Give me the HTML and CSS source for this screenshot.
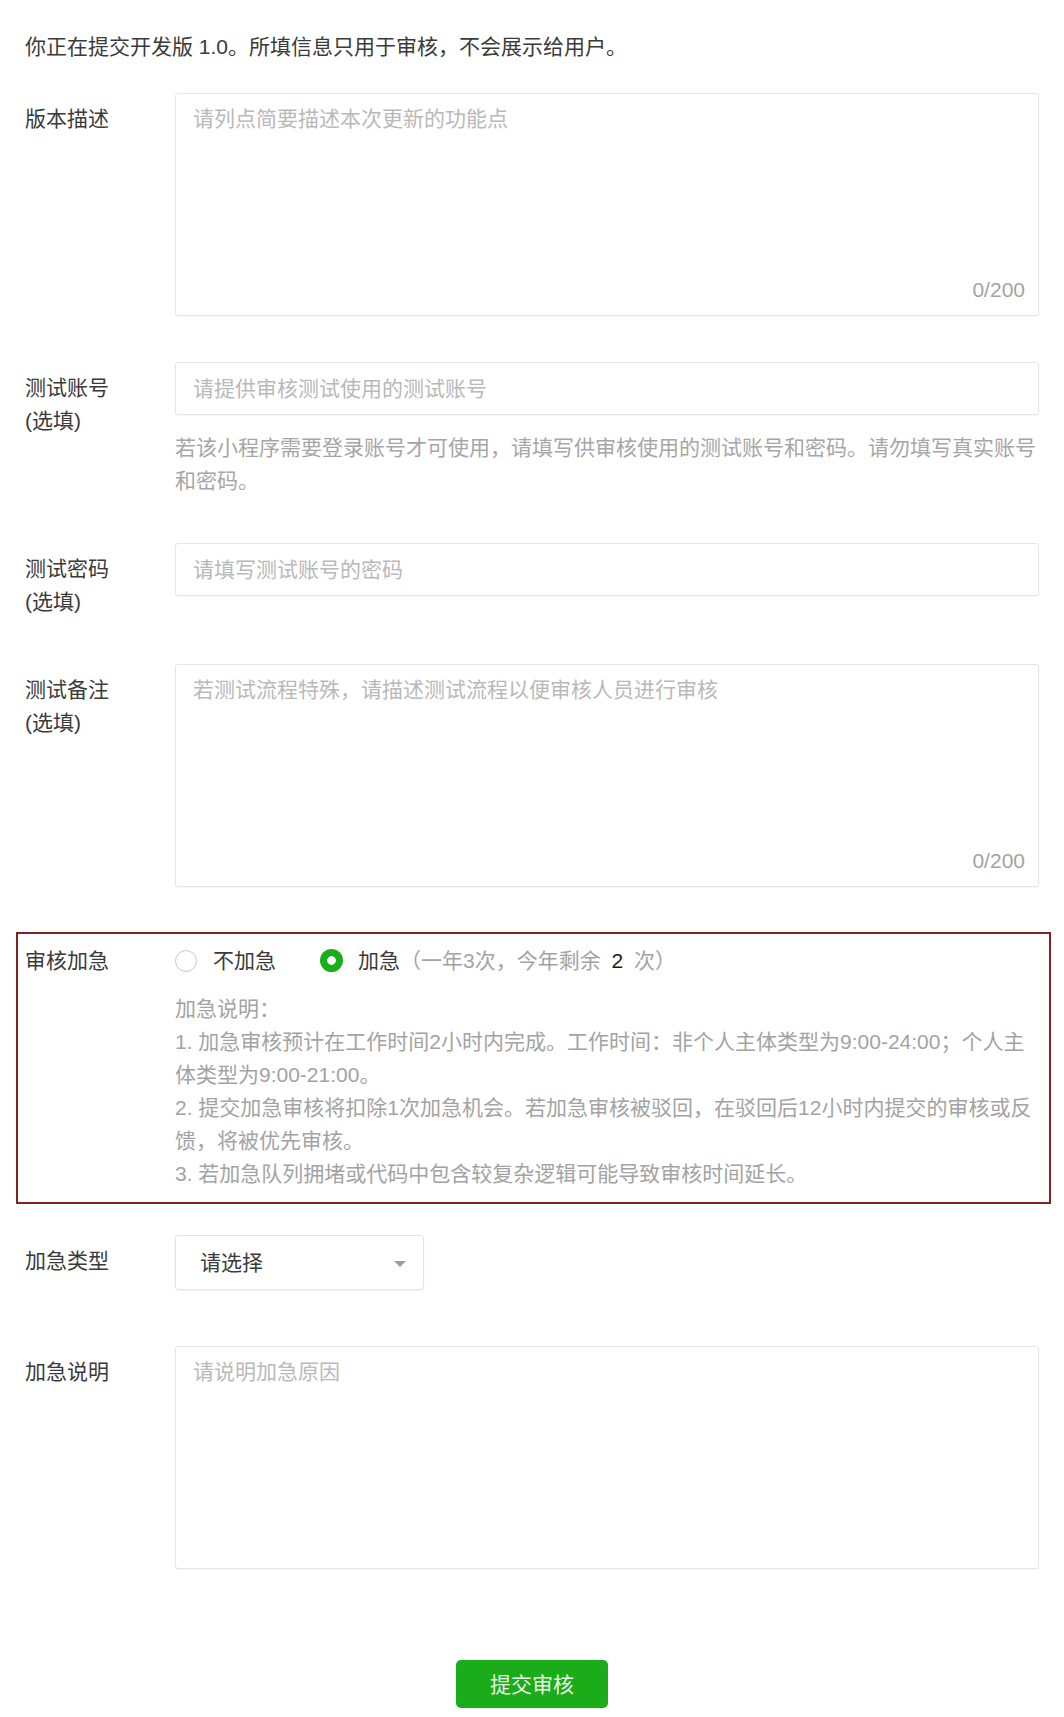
FILE: index.html
```html
<!DOCTYPE html>
<html lang="zh-CN">
<head>
<meta charset="utf-8">
<title>提交审核</title>
<link rel="stylesheet" href="styles.css">
</head>
<body>
<div class="page">
  <p class="intro">你正在提交开发版 1.0。所填信息只用于审核，不会展示给用户。</p>

  <div class="row row-first">
    <div class="label">版本描述</div>
    <div class="field">
      <textarea class="textarea" placeholder="请列点简要描述本次更新的功能点"></textarea>
      <span class="counter">0/200</span>
    </div>
  </div>

  <div class="row">
    <div class="label">测试账号<br>(选填)</div>
    <div class="field">
      <input class="input" type="text" placeholder="请提供审核测试使用的测试账号">
      <p class="hint">若该小程序需要登录账号才可使用，请填写供审核使用的测试账号和密码。请勿填写真实账号和密码。</p>
    </div>
  </div>

  <div class="row">
    <div class="label">测试密码<br>(选填)</div>
    <div class="field">
      <input class="input" type="text" placeholder="请填写测试账号的密码">
    </div>
  </div>

  <div class="row">
    <div class="label">测试备注<br>(选填)</div>
    <div class="field">
      <textarea class="textarea" placeholder="若测试流程特殊，请描述测试流程以便审核人员进行审核"></textarea>
      <span class="counter">0/200</span>
    </div>
  </div>

  <div class="urgent-box">
    <div class="row">
      <div class="label">审核加急</div>
      <div class="field urgent-body">
        <div class="radios">
          <label class="option"><span class="radio"></span>不加急</label>
          <label class="option"><span class="radio radio-on"></span>加急<span class="muted">（一年3次，今年剩余 <b class="count">2</b> 次）</span></label>
        </div>
        <div class="notes">
          <p>加急说明：</p>
          <p>1. 加急审核预计在工作时间2小时内完成。工作时间：非个人主体类型为9:00-24:00；个人主体类型为9:00-21:00。</p>
          <p>2. 提交加急审核将扣除1次加急机会。若加急审核被驳回，在驳回后12小时内提交的审核或反馈，将被优先审核。</p>
          <p>3. 若加急队列拥堵或代码中包含较复杂逻辑可能导致审核时间延长。</p>
        </div>
      </div>
    </div>
  </div>

  <div class="row row-after-box">
    <div class="label">加急类型</div>
    <div class="field">
      <div class="select">请选择<span class="caret"></span></div>
    </div>
  </div>

  <div class="row row-after-select">
    <div class="label">加急说明</div>
    <div class="field">
      <textarea class="textarea" placeholder="请说明加急原因"></textarea>
    </div>
  </div>

  <div class="actions">
    <button class="btn" type="button">提交审核</button>
  </div>
</div>
</body>
</html>
```

FILE: styles.css
```css
* { box-sizing: border-box; }

html, body {
  margin: 0;
  background: #ffffff;
}

body {
  font-family: "Liberation Sans", "Noto Sans CJK SC", sans-serif;
  font-size: 21px;
  line-height: 33px;
  color: #3a3a3a;
}

.page {
  width: 1064px;
  padding: 30px 25px 8px;
}

.intro {
  margin: 0;
}

.row {
  display: flex;
  margin-top: 46px;
}

.row-first { margin-top: 30px; }
.row-after-box { margin-top: 31px; }
.row-after-select { margin-top: 56px; }

.label {
  width: 150px;
  flex-shrink: 0;
  padding-top: 9px;
  color: #3a3a3a;
}

.field {
  position: relative;
  flex: 1;
  min-width: 0;
}

.textarea,
.input {
  display: block;
  width: 100%;
  margin: 0;
  border: 1px solid #e6e6e6;
  border-radius: 3px;
  background: #fff;
  box-shadow: 0 1px 2px rgba(0, 0, 0, 0.04);
  font: inherit;
  color: #353535;
  outline: none;
}

.textarea {
  height: 223px;
  padding: 8px 17px;
  resize: none;
}

.input {
  height: 53px;
  padding: 0 17px;
}

.textarea::placeholder,
.input::placeholder {
  color: #b9b9b9;
}

.counter {
  position: absolute;
  right: 14px;
  bottom: 10px;
  color: #a3a3a3;
}

.hint {
  margin: 16px 0 0;
  color: #a6a6a6;
}

/* urgent section */
.urgent-box {
  margin: 45px -12px 0 -9px;
  border: 2px solid #7f2520;
  padding: 1px 10px 12px 7px;
}

.urgent-box .row {
  margin-top: 0;
}

.urgent-body {
  padding-top: 9px;
}

.radios {
  display: flex;
  align-items: center;
  gap: 44px;
}

.option {
  display: flex;
  align-items: center;
  color: #3a3a3a;
}

.radio {
  width: 22px;
  height: 22px;
  border: 1px solid #c8c8c8;
  border-radius: 50%;
  margin-right: 16px;
  background: #fff;
  flex-shrink: 0;
}

.radio-on {
  width: 23px;
  height: 23px;
  border: none;
  margin-right: 15px;
  background: radial-gradient(circle, #ffffff 0 4px, #1aad19 4.6px);
}

.muted {
  color: #a3a3a3;
}

.count {
  font-weight: normal;
  color: #1a1a1a;
  margin: 0 5px;
}

.notes {
  margin-top: 15px;
  color: #a3a3a3;
}

.notes p {
  margin: 0;
}

/* select */
.select {
  position: relative;
  width: 249px;
  height: 55px;
  padding-left: 24px;
  border: 1px solid #e3e3e3;
  border-radius: 3px;
  box-shadow: 0 1px 2px rgba(0, 0, 0, 0.05);
  display: flex;
  align-items: center;
  color: #3a3a3a;
}

.caret {
  position: absolute;
  right: 17px;
  top: 25px;
  width: 0;
  height: 0;
  border-left: 6px solid transparent;
  border-right: 6px solid transparent;
  border-top: 6px solid #9e9e9e;
}

/* button */
.actions {
  display: flex;
  justify-content: center;
  margin-top: 91px;
}

.btn {
  width: 152px;
  height: 48px;
  margin: 0;
  border: none;
  border-radius: 5px;
  background: #1aad19;
  color: rgba(255, 255, 255, 0.92);
  font: inherit;
  padding: 0;
}
```
